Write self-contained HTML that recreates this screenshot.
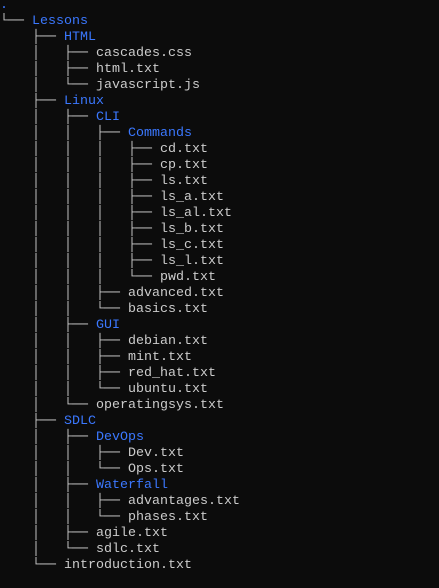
<!DOCTYPE html>
<html><head><meta charset="utf-8"><style>
html,body{margin:0;padding:0;background:#0c0c0c;width:439px;height:588px;overflow:hidden}
pre{margin:0;position:absolute;left:0;top:-2px;font-family:"Liberation Mono","DejaVu Sans Mono",monospace;font-size:13.33px;line-height:16px;color:#cccccc}
b{font-weight:normal;color:#3b78ff}
</style></head><body><pre><b>.</b>
└── <b>Lessons</b>
    ├── <b>HTML</b>
    │   ├── cascades.css
    │   ├── html.txt
    │   └── javascript.js
    ├── <b>Linux</b>
    │   ├── <b>CLI</b>
    │   │   ├── <b>Commands</b>
    │   │   │   ├── cd.txt
    │   │   │   ├── cp.txt
    │   │   │   ├── ls.txt
    │   │   │   ├── ls_a.txt
    │   │   │   ├── ls_al.txt
    │   │   │   ├── ls_b.txt
    │   │   │   ├── ls_c.txt
    │   │   │   ├── ls_l.txt
    │   │   │   └── pwd.txt
    │   │   ├── advanced.txt
    │   │   └── basics.txt
    │   ├── <b>GUI</b>
    │   │   ├── debian.txt
    │   │   ├── mint.txt
    │   │   ├── red_hat.txt
    │   │   └── ubuntu.txt
    │   └── operatingsys.txt
    ├── <b>SDLC</b>
    │   ├── <b>DevOps</b>
    │   │   ├── Dev.txt
    │   │   └── Ops.txt
    │   ├── <b>Waterfall</b>
    │   │   ├── advantages.txt
    │   │   └── phases.txt
    │   ├── agile.txt
    │   └── sdlc.txt
    └── introduction.txt
</pre></body></html>
